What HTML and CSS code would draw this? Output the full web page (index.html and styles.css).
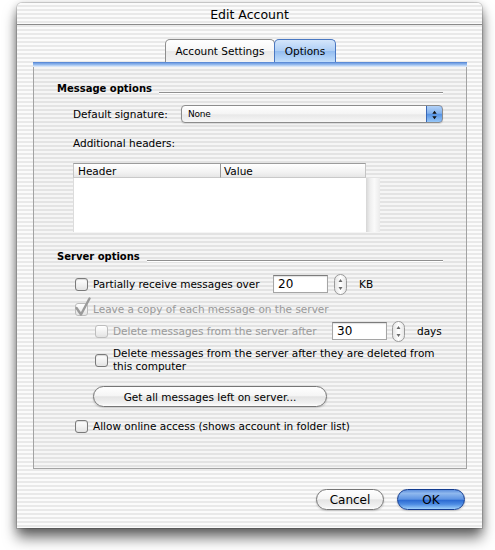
FILE: index.html
```html
<!DOCTYPE html>
<html lang="en">
<head>
<meta charset="utf-8">
<title>Edit Account</title>
<link rel="stylesheet" href="styles.css">
</head>
<body>
<div class="window">
  <div class="titlebar">Edit Account</div>
  <div class="content">
    <div class="tabs">
      <div class="tab tab-settings">Account Settings</div>
      <div class="tab tab-options is-active">Options</div>
    </div>
    <div class="tabbox">
      <div class="tabbox-rule"></div>
      <div class="panel">
        <div class="group-head head-message">
          <span class="group-title">Message options</span>
          <span class="group-line"></span>
        </div>
        <div class="sig-row">
          <span class="sig-label">Default signature:</span>
          <div class="popup">
            <span class="popup-value">None</span>
            <span class="popup-cap">
              <svg width="17" height="18" viewBox="0 0 17 18"><path d="M6 7.5 L8.5 4.2 L11 7.5 Z M6 10.5 L8.5 13.8 L11 10.5 Z" fill="#111"/></svg>
            </span>
          </div>
        </div>
        <div class="plain-label">Additional headers:</div>
        <div class="headers-table">
          <div class="th th-first">Header</div>
          <div class="th th-last">Value</div>
          <div class="tbody"></div>
          <div class="scroll-track"></div>
        </div>

        <div class="group-head head-server">
          <span class="group-title">Server options</span>
          <span class="group-line"></span>
        </div>
        <div class="opt opt-partial">
          <span class="check"></span>
          <span class="opt-text w-partial">Partially receive messages over</span>
          <span class="field">20</span>
          <span class="stepper gap-partial">
            <svg width="13" height="21" viewBox="0 0 13 21"><rect x="0.5" y="0.5" width="12" height="20" rx="6" fill="url(#stepFill)" stroke="#9a9a9a"/><path d="M4.5 8 L6.5 5 L8.5 8 Z M4.5 13 L6.5 16 L8.5 13 Z" fill="#6a6a6a"/><defs><linearGradient id="stepFill" x1="0" y1="0" x2="1" y2="0"><stop offset="0" stop-color="#e2e2e2"/><stop offset="0.5" stop-color="#ffffff"/><stop offset="1" stop-color="#e4e4e4"/></linearGradient></defs></svg>
          </span>
          <span class="unit unit-kb">KB</span>
        </div>
        <div class="opt opt-leave is-disabled">
          <span class="check">
            <svg class="tick" width="16" height="19" viewBox="0 0 16 19"><path d="M1.5 11 L6 17.5 L14.5 1.5" fill="none" stroke="#9b9b9b" stroke-width="2.4" stroke-linecap="round" stroke-linejoin="round"/></svg>
          </span>
          <span class="opt-text">Leave a copy of each message on the server</span>
        </div>
        <div class="opt opt-after sub is-disabled">
          <span class="check"></span>
          <span class="opt-text w-after">Delete messages from the server after</span>
          <span class="field">30</span>
          <span class="stepper gap-after">
            <svg width="13" height="21" viewBox="0 0 13 21"><rect x="0.5" y="0.5" width="12" height="20" rx="6" fill="url(#stepFill2)" stroke="#9a9a9a"/><path d="M4.5 8 L6.5 5 L8.5 8 Z M4.5 13 L6.5 16 L8.5 13 Z" fill="#6a6a6a"/><defs><linearGradient id="stepFill2" x1="0" y1="0" x2="1" y2="0"><stop offset="0" stop-color="#e2e2e2"/><stop offset="0.5" stop-color="#ffffff"/><stop offset="1" stop-color="#e4e4e4"/></linearGradient></defs></svg>
          </span>
          <span class="unit unit-days">days</span>
        </div>
        <div class="opt opt-deleted sub">
          <span class="check"></span>
          <span class="opt-text">Delete messages from the server after they are deleted from<br>this computer</span>
        </div>
        <div class="get-row">
          <button class="pill-btn get-btn" type="button">Get all messages left on server...</button>
        </div>
        <div class="opt opt-online">
          <span class="check"></span>
          <span class="opt-text">Allow online access (shows account in folder list)</span>
        </div>
      </div>
    </div>
    <div class="actions">
      <button class="pill-btn action-btn" type="button">Cancel</button>
      <button class="pill-btn action-btn is-default" type="button">OK</button>
    </div>
  </div>
</div>
</body>
</html>
```

FILE: styles.css
```css
* {
  box-sizing: border-box;
}

html,
body {
  margin: 0;
  padding: 0;
  background: #ffffff;
}

body {
  width: 495px;
  height: 550px;
  overflow: hidden;
  font-family: "DejaVu Sans", "Lucida Grande", sans-serif;
  font-size: 10.5px;
  color: #000;
}

/* ---------- window chrome ---------- */
.window {
  margin: 3px 0 0 17px;
  width: 465px;
  height: 525px;
  display: flex;
  flex-direction: column;
  border-radius: 5px 5px 0 0;
  background: repeating-linear-gradient(to bottom, #fbfbfb 0 2px, #e9e9e9 2px 4px);
  box-shadow: 0 0 0 1px rgba(0, 0, 0, 0.13), 0 10px 14px rgba(0, 0, 0, 0.55), 0 2px 9px rgba(0, 0, 0, 0.28);
}

.titlebar {
  flex: none;
  height: 22px;
  display: flex;
  align-items: center;
  justify-content: center;
  padding-top: 1px;
  font-size: 12.5px;
  border-bottom: 1px solid #8a8a8a;
  border-radius: 5px 5px 0 0;
}

.content {
  flex: 1;
  display: flex;
  flex-direction: column;
  padding: 14px 15px 0 16px;
}

/* ---------- tabs ---------- */
.tabs {
  flex: none;
  height: 23px;
  display: flex;
  justify-content: center;
  padding-left: 1px;
}

.tab {
  height: 23px;
  display: flex;
  align-items: center;
  justify-content: center;
  border: 1px solid #8e8e8e;
  border-bottom: none;
  border-radius: 5px 5px 0 0;
  background: linear-gradient(to bottom, #ffffff 0%, #f6f6f6 50%, #e9e9e9 52%, #f3f3f3 100%);
  font-size: 10.5px;
}

.tab-settings {
  width: 110px;
  margin-right: -1px;
}

.tab-options {
  width: 62px;
}

.tab.is-active {
  border-color: #4a78c2;
  background: linear-gradient(to bottom, #d4e6fb 0%, #afcff5 48%, #94bdf0 52%, #c2defb 100%);
  position: relative;
}

.tabbox {
  flex: none;
  height: 407px;
  display: flex;
  flex-direction: column;
  border: 1px solid #a3a3a3;
  border-top: none;
  background: rgba(0, 0, 0, 0.025);
}

.tabbox-rule {
  flex: none;
  height: 5px;
  margin: 0 -1px;
  background: linear-gradient(to bottom, #4a7bcc 0, #6f9de2 1px, #9fc2f0 3px, #c9ddf7 4px, #e4ecf7 5px);
}

.panel {
  display: flex;
  flex-direction: column;
  padding: 0 23px;
}

/* ---------- group headings ---------- */
.group-head {
  height: 14px;
  display: flex;
  align-items: flex-start;
  line-height: 14px;
}

.head-message {
  margin-top: 15px;
}

.head-server {
  margin-top: 18px;
}

.group-title {
  font-weight: bold;
  font-size: 10px;
}

.group-line {
  flex: 1;
  height: 1px;
  margin: 10px 0 0 7px;
  background: #8f8f8f;
  box-shadow: 0 1px 0 #ffffff;
}

/* ---------- signature popup ---------- */
.sig-row {
  margin: 9px 0 0 16px;
  height: 18px;
  display: flex;
  align-items: center;
}

.sig-label {
  width: 108px;
}

.popup {
  flex: 1;
  height: 18px;
  display: flex;
  border: 1px solid #8c8c8c;
  border-radius: 4px;
  background: linear-gradient(to bottom, #ffffff 0%, #f4f4f4 50%, #e8e8e8 55%, #f7f7f7 100%);
  box-shadow: 0 1px 1px rgba(0, 0, 0, 0.12);
  overflow: hidden;
}

.popup-value {
  flex: 1;
  padding: 1px 0 0 6px;
  font-size: 9px;
  line-height: 14px;
  letter-spacing: -0.2px;
}

.popup-cap {
  width: 17px;
  margin: -1px -1px -1px 0;
  display: flex;
  border: 1px solid #3a68b6;
  border-radius: 0 4px 4px 0;
  background: linear-gradient(to bottom, #b3d2f7 0%, #84b2ed 45%, #5693e4 52%, #97c7f7 100%);
}

/* ---------- headers table ---------- */
.plain-label {
  margin: 13px 0 0 16px;
  height: 14px;
  line-height: 14px;
}

.headers-table {
  margin: 13px 0 0 16px;
  display: grid;
  grid-template-columns: 148px 145px 14px;
  grid-template-rows: 15px 54px;
  width: 307px;
}

.th {
  display: flex;
  align-items: center;
  padding-left: 4px;
  border-top: 1px solid #9c9c9c;
  border-bottom: 1px solid #c9c9c9;
  background: linear-gradient(to bottom, #ffffff 0%, #f3f3f3 60%, #e6e6e6 100%);
}

.th-first {
  border-left: 1px solid #c4c4c4;
  border-right: 1px solid #9a9a9a;
}

.th-last {
  padding-left: 3px;
  border-right: 1px solid #c4c4c4;
}

.tbody {
  grid-column: 1 / 3;
  grid-row: 2;
  background: #ffffff;
  border-left: 1px solid #dcdcdc;
}

.scroll-track {
  grid-column: 3;
  grid-row: 2;
  background: linear-gradient(to right, #d6d6d6 0%, #efefef 30%, #fafafa 60%, #ebebeb 100%);
}

/* ---------- option rows ---------- */
.opt {
  display: flex;
  align-items: center;
  margin-left: 18px;
}

.opt.sub {
  margin-left: 38px;
}

.opt-partial {
  margin-top: 11px;
  height: 18px;
}

.opt-leave {
  margin-top: 9px;
  height: 14px;
}

.opt-after {
  margin-top: 6px;
  height: 18px;
}

.opt-deleted {
  margin-top: 7px;
  height: 26px;
}

.opt-online {
  margin-top: 12px;
  height: 14px;
}

.check {
  position: relative;
  flex: none;
  width: 13px;
  height: 13px;
  margin-right: 5px;
  border: 1px solid #7a7a7a;
  border-radius: 3px;
  background: linear-gradient(to bottom, #ffffff 0%, #f2f2f2 50%, #e3e3e3 100%);
  box-shadow: inset 0 1px 1px rgba(0, 0, 0, 0.15);
}

.is-disabled .check {
  border-color: #bdbdbd;
  box-shadow: none;
}

.tick {
  position: absolute;
  left: -1px;
  top: -7px;
}

.opt-text {
  line-height: 13px;
}

.is-disabled .opt-text {
  color: #9a9a9a;
}

.w-partial {
  width: 180px;
}

.w-after {
  width: 219px;
}

.field {
  flex: none;
  width: 55px;
  height: 18px;
  padding: 0 0 0 4px;
  font-size: 12px;
  line-height: 16px;
  color: #000;
  background: #ffffff;
  border: 1px solid #a5a5a5;
  border-top-color: #7c7c7c;
  box-shadow: inset 0 1px 1px rgba(0, 0, 0, 0.12);
}

.stepper {
  display: flex;
  flex: none;
}

.gap-partial {
  margin-left: 6px;
}

.gap-after {
  margin-left: 5px;
}

.unit-kb {
  margin-left: 12px;
}

.unit-days {
  margin-left: 12px;
}

/* ---------- push buttons ---------- */
.pill-btn {
  height: 21px;
  padding: 0;
  font-family: inherit;
  font-size: 10.5px;
  color: #000;
  border: 1px solid #767676;
  border-radius: 11px;
  background: linear-gradient(to bottom, #ffffff 0%, #f5f5f5 45%, #e4e4e4 52%, #f1f1f1 85%, #ffffff 100%);
  box-shadow: 0 1px 2px rgba(0, 0, 0, 0.2);
}

.get-row {
  margin: 13px 0 0 36px;
  display: flex;
}

.get-btn {
  width: 234px;
}

.actions {
  margin-top: 20px;
  padding-right: 2px;
  display: flex;
  justify-content: flex-end;
  gap: 13px;
}

.action-btn {
  width: 68px;
  font-size: 12px;
}

.action-btn.is-default {
  border-color: #143c8f;
  background: linear-gradient(to bottom, #5d8fdd 0%, #8fb8ee 18%, #5e94e3 48%, #2d6cd3 55%, #4d8ce3 75%, #9fd0fa 100%);
}
```
